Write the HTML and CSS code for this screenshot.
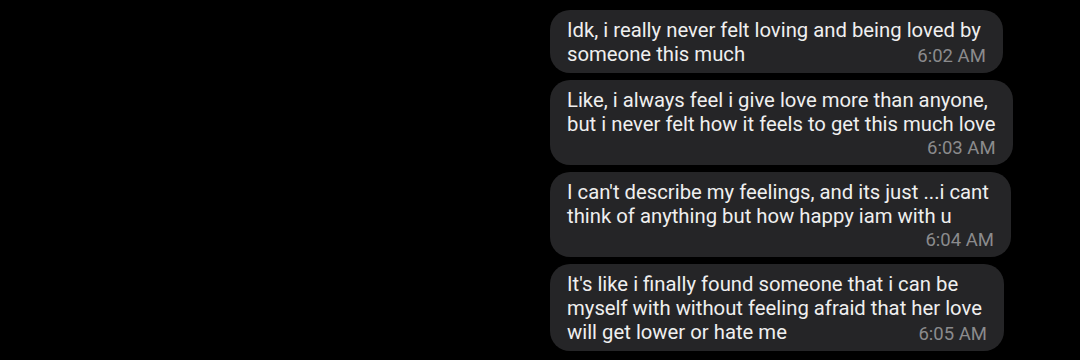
FILE: index.html
```html
<!DOCTYPE html>
<html lang="en">
<head>
<meta charset="utf-8">
<link rel="stylesheet" href="styles.css">
</head>
<body>
<div class="thread">
  <div class="bubble slack">
    <div class="text">Idk, i really never felt loving and being loved by<br>someone this much</div>
    <div class="time overlap">6:02 AM</div>
  </div>
  <div class="bubble">
    <div class="text">Like, i always feel i give love more than anyone,<br>but i never felt how it feels to get this much love</div>
    <div class="time">6:03 AM</div>
  </div>
  <div class="bubble slack">
    <div class="text">I can't describe my feelings, and its just ...i cant<br>think of anything but how happy iam with u</div>
    <div class="time">6:04 AM</div>
  </div>
  <div class="bubble slack">
    <div class="text">It's like i finally found someone that i can be<br>myself with without feeling afraid that her love<br>will get lower or hate me</div>
    <div class="time overlap">6:05 AM</div>
  </div>
</div>
</body>
</html>
```

FILE: styles.css
```css
html, body {
  margin: 0;
  padding: 0;
  background: #000;
  width: 1080px;
  height: 360px;
  overflow: hidden;
}
.thread {
  display: flex;
  flex-direction: column;
  align-items: flex-start;
  gap: 7px;
  padding: 10px 0 0 550px;
  font-family: Roboto, "Noto Sans", sans-serif;
}
.bubble {
  background: #252527;
  border-radius: 20px;
  padding: 8px 17px 7px 17px;
  display: flex;
  flex-direction: column;
}
.bubble.slack .text {
  padding-right: 5px;
}
.text {
  color: #efefef;
  font-size: 20.3px;
  line-height: 24px;
  white-space: nowrap;
}
.time {
  align-self: flex-end;
  color: #8b8b8d;
  font-size: 18.5px;
  line-height: 20px;
  margin-top: 2px;
}
.time.overlap {
  margin-top: -20px;
}
```
